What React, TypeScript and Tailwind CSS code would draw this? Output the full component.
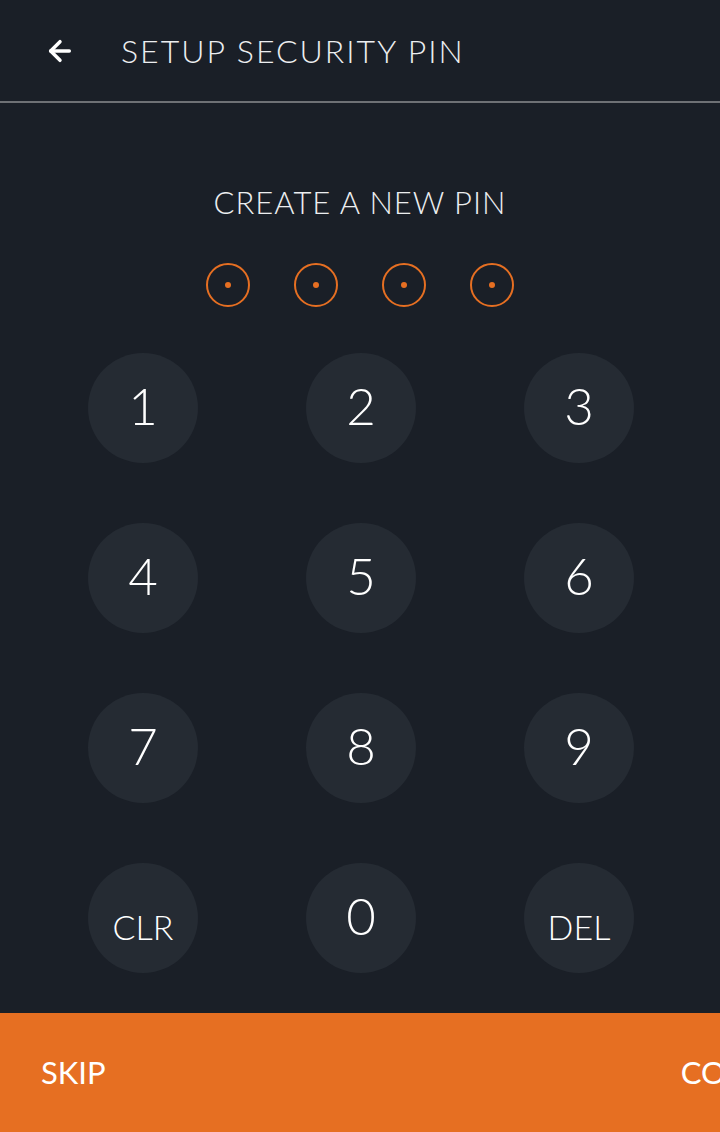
import { ArrowLeft } from "lucide-react";

const KEYS = ["1", "2", "3", "4", "5", "6", "7", "8", "9", "CLR", "0", "DEL"];

const FONT = "font-['Lato','Open_Sans',sans-serif]";

function PinDot() {
  return (
    <div className="flex h-[44px] w-[44px] items-center justify-center rounded-full border-2 border-[#e66f22]">
      <div className="h-[6px] w-[6px] rounded-full bg-[#e66f22]" />
    </div>
  );
}

function Key({ label }: { label: string }) {
  const isWord = label.length > 1;
  return (
    <button
      type="button"
      className="flex h-[110px] w-[110px] items-center justify-center rounded-full bg-[#252b33] text-white"
    >
      {isWord ? (
        <span className="mt-[18px] text-[34px] font-light leading-none">{label}</span>
      ) : (
        <span className="mb-[5px] text-[51px] font-light leading-none">{label}</span>
      )}
    </button>
  );
}

export default function App() {
  return (
    <div className={`flex min-h-[1132px] w-[720px] flex-col bg-[#1a1f27] ${FONT}`}>
      <header className="flex h-[103px] items-center border-b-2 border-[#6e7175]">
        <ArrowLeft className="ml-[44px] h-[32px] w-[32px] text-white" strokeWidth={2.6} />
        <h1 className="ml-[45px] text-[32px] font-light tracking-[2px] text-[#eceef0]">
          SETUP SECURITY PIN
        </h1>
      </header>

      <main className="flex flex-1 flex-col items-center">
        <p className="mt-[84px] text-[31px] font-light leading-none tracking-[1px] text-[#eceef0]">
          CREATE A NEW PIN
        </p>
        <div className="mt-[45px] flex gap-[44px]">
          <PinDot />
          <PinDot />
          <PinDot />
          <PinDot />
        </div>
        <div className="ml-[2px] mt-[46px] grid grid-cols-[110px_110px_110px] gap-x-[108px] gap-y-[60px]">
          {KEYS.map((k) => (
            <Key key={k} label={k} />
          ))}
        </div>
      </main>

      <footer className="flex h-[119px] items-center justify-between overflow-hidden bg-[#e66f22] pl-[41px] text-[31px] text-white">
        <span>SKIP</span>
        <span className="-mr-[104px] whitespace-nowrap">CONFIRM</span>
      </footer>
    </div>
  );
}
